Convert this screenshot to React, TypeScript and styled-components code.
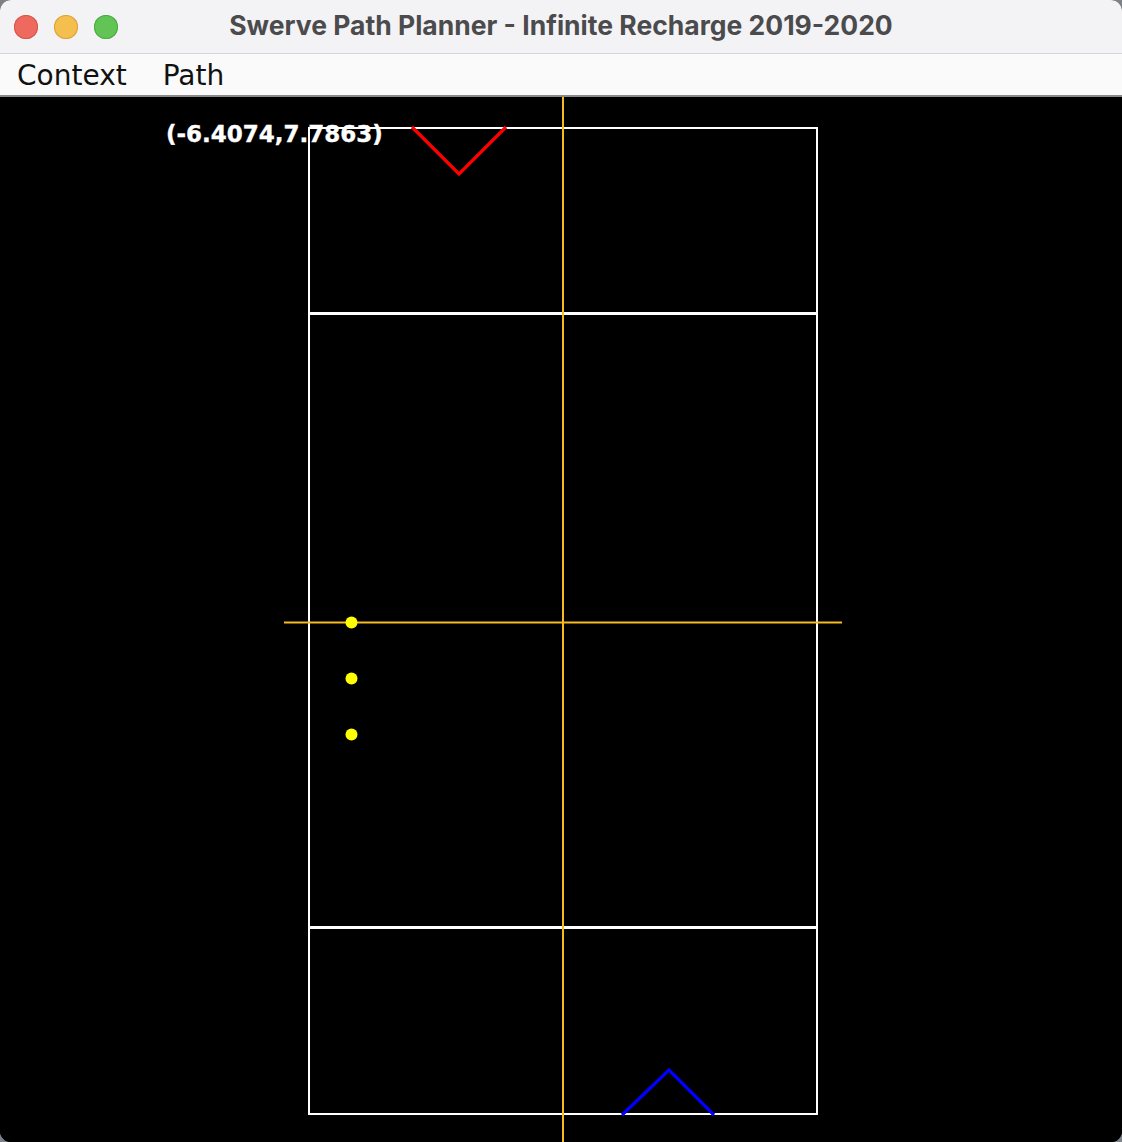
import React from "react";
import styled, { createGlobalStyle } from "styled-components";

const Global = createGlobalStyle`
  html, body { margin: 0; padding: 0; background: #7d8188; }
  #root { width: 1122px; height: 1142px; }
`;

const Window = styled.div`
  width: 1122px;
  height: 1142px;
  display: flex;
  flex-direction: column;
  border-radius: 11px;
  overflow: hidden;
  background: #000;
`;

const TitleBar = styled.div`
  height: 53px;
  flex: 0 0 53px;
  background: #f3f3f5;
  border-bottom: 1px solid #d6d6d8;
  display: grid;
  grid-template-columns: 140px 1fr 140px;
  align-items: center;
`;

const Lights = styled.div`
  display: flex;
  gap: 16px;
  padding-left: 14px;
`;

const Light = styled.span<{ $c: string; $b: string }>`
  width: 24px;
  height: 24px;
  border-radius: 50%;
  background: ${(p) => p.$c};
  box-shadow: inset 0 0 0 1px ${(p) => p.$b};
`;

const Title = styled.div`
  text-align: center;
  font-family: Inter, "Liberation Sans", sans-serif;
  font-weight: 700;
  font-size: 26.5px;
  color: #4b4b4d;
  white-space: nowrap;
  margin-top: -3px;
`;

const MenuBar = styled.div`
  height: 41px;
  flex: 0 0 41px;
  background: #fafafa;
  border-bottom: 2px solid #8a8a8a;
  display: flex;
  align-items: center;
  gap: 36px;
  padding-left: 17px;
`;

const MenuItem = styled.span`
  font-family: "DejaVu Sans", sans-serif;
  font-size: 28px;
  color: #111;
  padding-top: 1px;
`;

const Canvas = styled.div`
  flex: 1;
  position: relative;
  background: #000;
`;

const Field = styled.svg`
  position: absolute;
  inset: 0;
  width: 100%;
  height: 100%;
  display: block;
`;

const Coord = styled.text`
  font-family: "DejaVu Sans", sans-serif;
  font-weight: 700;
  font-size: 23px;
  fill: #fff;
  stroke: #fff;
  stroke-width: 0.4px;
`;

const YELLOW = "#f6ba22";

export default function App() {
  const dots = [622, 678, 734];
  return (
    <>
      <Global />
      <Window>
        <TitleBar>
          <Lights>
            <Light $c="#ee6a5f" $b="#d8544a" />
            <Light $c="#f5bf4f" $b="#d9a23a" />
            <Light $c="#61c454" $b="#4ea942" />
          </Lights>
          <Title>Swerve Path Planner - Infinite Recharge 2019-2020</Title>
          <div />
        </TitleBar>
        <MenuBar>
          <MenuItem>Context</MenuItem>
          <MenuItem>Path</MenuItem>
        </MenuBar>
        <Canvas>
          <Field viewBox="0 97 1122 1045" preserveAspectRatio="none">
            <rect x="309" y="128" width="508" height="986" fill="none" stroke="#fff" strokeWidth="2" />
            <line x1="309" y1="313.5" x2="817" y2="313.5" stroke="#fff" strokeWidth="3" />
            <line x1="309" y1="927.5" x2="817" y2="927.5" stroke="#fff" strokeWidth="3" />
            <line x1="563" y1="97" x2="563" y2="1142" stroke={YELLOW} strokeWidth="2" />
            <line x1="284" y1="622.5" x2="842" y2="622.5" stroke={YELLOW} strokeWidth="2" />
            {dots.map((y) => (
              <circle key={y} cx="351.5" cy={y + 0.5} r="6" fill="#ffff00" />
            ))}
            <polyline points="412,127 459,174 506,127" fill="none" stroke="#ff0000" strokeWidth="3.2" />
            <polyline points="622,1115 669,1070 714,1115" fill="none" stroke="#0000ff" strokeWidth="3.2" />
            <Coord x="166" y="142">(-6.4074,7.7863)</Coord>
          </Field>
        </Canvas>
      </Window>
    </>
  );
}
